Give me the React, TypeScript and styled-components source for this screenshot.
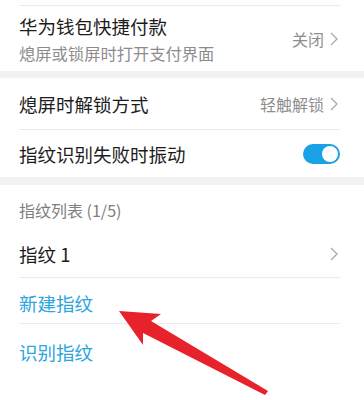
import React from "react";
import styled, { createGlobalStyle } from "styled-components";

const Global = createGlobalStyle`
  html, body { margin: 0; padding: 0; background: #ffffff; }
  body { font-family: "Noto Sans CJK SC", "Noto Sans", sans-serif; }
  #root { width: 364px; height: 400px; overflow: hidden; }
`;

const Page = styled.div`
  position: relative;
  width: 364px;
  height: 400px;
  background: #f2f2f2;
  display: flex;
  flex-direction: column;
  overflow: hidden;
`;

const Group = styled.div<{ $grow?: boolean }>`
  background: #ffffff;
  padding-left: 19px;
  display: flex;
  flex-direction: column;
  flex: ${(p) => (p.$grow ? "1" : "none")};
`;

const Gap = styled.div<{ $h: number }>`
  height: ${(p) => p.$h}px;
  flex: none;
`;

const Row = styled.div<{ $h: number; $divider?: boolean; $pt?: number }>`
  height: ${(p) => p.$h}px;
  box-sizing: content-box;
  display: flex;
  align-items: center;
  justify-content: space-between;
  padding-top: ${(p) => p.$pt ?? 0}px;
  margin-right: 24px;
  padding-right: 2px;
  border-bottom: ${(p) => (p.$divider ? "1px solid #ebebeb" : "none")};
`;

const TextCol = styled.div`
  display: flex;
  flex-direction: column;
  gap: 6px;
`;

const Title = styled.div<{ $blue?: boolean }>`
  font-size: 18.5px;
  line-height: 22px;
  color: ${(p) => (p.$blue ? "#2ba4e0" : "#1c1c1c")};
`;

const Sub = styled.div`
  font-size: 16.3px;
  line-height: 20px;
  color: #8c8c8c;
`;

const Header = styled.div`
  font-size: 16px;
  line-height: 20px;
  color: #7e7e7e;
`;

const Value = styled.div`
  display: flex;
  align-items: center;
  gap: 6px;
  font-size: 16px;
  color: #8e8e8e;
`;

const Chevron = () => (
  <svg width="8" height="14" viewBox="0 0 8 14">
    <path d="M1 1 L7 7 L1 13" fill="none" stroke="#a8a8a8" strokeWidth="1.3" />
  </svg>
);

const Toggle = styled.div`
  width: 37px;
  height: 20px;
  border-radius: 10px;
  background: #1aa1e6;
  position: relative;
  margin-right: -2px;
  &::after {
    content: "";
    position: absolute;
    right: 2px;
    top: 2px;
    width: 16px;
    height: 16px;
    border-radius: 50%;
    background: #ffffff;
  }
`;

const Arrow = styled.svg`
  position: absolute;
  left: 0;
  top: 0;
  pointer-events: none;
`;

export default function App() {
  return (
    <>
      <Global />
      <Page>
        <Group>
          <Row $h={5} $divider />
          <Row $h={65}>
            <TextCol>
              <Title>华为钱包快捷付款</Title>
              <Sub>熄屏或锁屏时打开支付界面</Sub>
            </TextCol>
            <Value>
              关闭
              <Chevron />
            </Value>
          </Row>
        </Group>
        <Gap $h={7} />
        <Group>
          <Row $h={51} $divider>
            <Title>熄屏时解锁方式</Title>
            <Value>
              轻触解锁
              <Chevron />
            </Value>
          </Row>
          <Row $h={47}>
            <Title>指纹识别失败时振动</Title>
            <Toggle />
          </Row>
        </Group>
        <Gap $h={8} />
        <Group $grow>
          <Row $h={41} $pt={4}>
            <Header>指纹列表 (1/5)</Header>
          </Row>
          <Row $h={47} $divider>
            <Title>指纹 1</Title>
            <Chevron />
          </Row>
          <Row $h={41} $pt={4} $divider>
            <Title $blue>新建指纹</Title>
          </Row>
          <Row $h={56}>
            <Title $blue>识别指纹</Title>
          </Row>
        </Group>
        <Arrow width="364" height="400" viewBox="0 0 364 400">
          <polygon
            points="119,311 161,314 151,321 268,391 265,395 143,333 143,345"
            fill="#e8222b"
          />
        </Arrow>
      </Page>
    </>
  );
}
